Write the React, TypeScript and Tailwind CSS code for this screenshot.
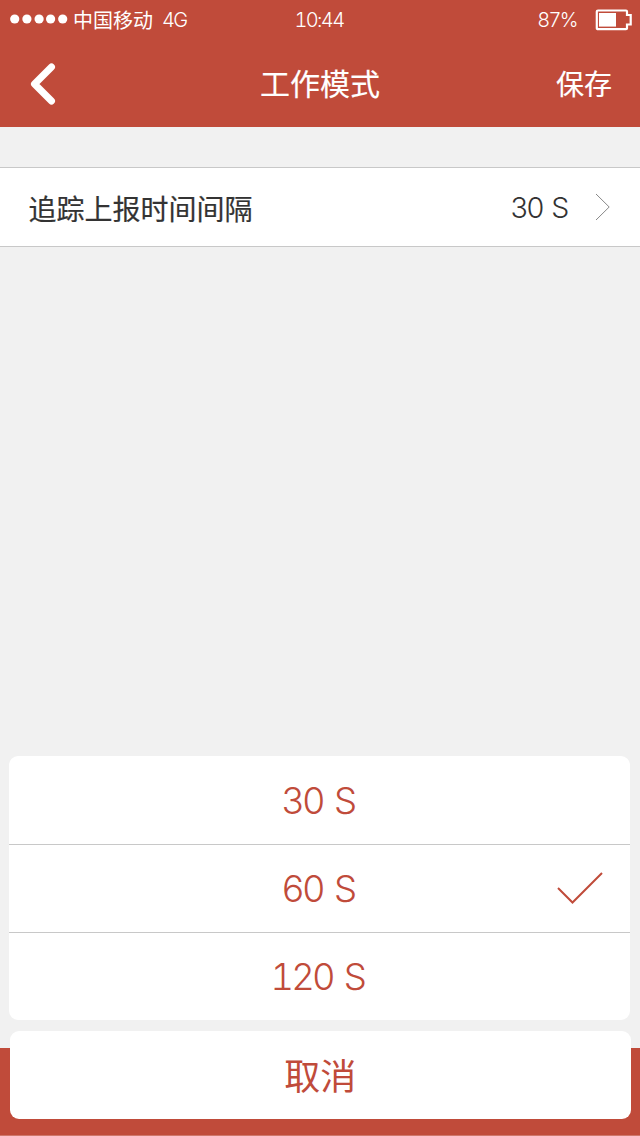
import React from "react";

const sans = "font-['Inter','Noto_Sans_CJK_SC',sans-serif] font-light";
const digits = "tabular-nums tracking-[-0.08em] [word-spacing:0.12em] whitespace-nowrap";
const cjk = "font-['Noto_Sans_CJK_SC',sans-serif] font-normal";

function StatusBar() {
  return (
    <div className="grid h-10 grid-cols-3 items-center text-[20px] leading-[40px]">
      <div className="flex h-10 items-center pl-[10px]">
        <svg width="58" height="10" viewBox="0 0 58 10" fill="currentColor" className="mb-[2px] shrink-0">
          <circle cx="4.7" cy="5" r="4.6" />
          <circle cx="16.9" cy="5" r="4.6" />
          <circle cx="29.1" cy="5" r="4.6" />
          <circle cx="40.6" cy="5" r="4.6" />
          <circle cx="52.7" cy="5" r="4.6" />
        </svg>
        <span className={`${cjk} ml-[5px] text-[20px] whitespace-nowrap`}>中国移动</span>
        <span className={`${digits} ml-[9px]`}>4G</span>
      </div>
      <div className={`${digits} pr-[2px] text-center`}>10:44</div>
      <div className="flex h-10 items-center justify-end pr-[7px]">
        <span className={digits}>87%</span>
        <svg width="38" height="22" viewBox="0 0 38 22" className="ml-[18px]">
          <path
            d="M3 1.5H31Q32 1.5 32 2.5V6H35.7V15.5H32V19.2Q32 20.2 31 20.2H3Q1.8 20.2 1.8 19.2V2.5Q1.8 1.5 3 1.5Z"
            fill="none"
            stroke="currentColor"
            strokeWidth="2.2"
          />
          <rect x="4" y="4" width="17" height="13.6" fill="currentColor" />
        </svg>
      </div>
    </div>
  );
}

function NavBar() {
  return (
    <div className={`${cjk} grid h-[87px] grid-cols-3 items-center leading-[85px]`}>
      <button className="ml-[30px] w-fit" aria-label="返回">
        <svg width="28" height="42" viewBox="0 0 28 42" fill="none" stroke="currentColor" strokeWidth="7" strokeLinecap="round" strokeLinejoin="round">
          <path d="M21.5 4L4.5 21L21.5 38" />
        </svg>
      </button>
      <h1 className="-mt-[3px] text-center text-[30px] font-normal [-webkit-text-stroke:0.15px_currentColor]">工作模式</h1>
      <button className="mr-[28px] justify-self-end text-[28px] [-webkit-text-stroke:0.15px_currentColor]">保存</button>
    </div>
  );
}

export default function App() {
  return (
    <div className={`${sans} relative flex h-[1136px] w-[640px] flex-col overflow-hidden bg-[#f1f1f1]`}>
      <header className="bg-[#c04b3a] text-white">
        <StatusBar />
        <NavBar />
      </header>

      <main className="flex-1 pt-10">
        <div className="flex h-20 items-center border-y border-[#c8c8c8] bg-white pr-[29px] pl-[28.5px] text-[28px] text-[#333]">
          <span className={`${cjk} pt-[2px] [-webkit-text-stroke:0.2px_currentColor]`}>追踪上报时间间隔</span>
          <span className={`${digits} ml-auto pt-[2px] text-[28.5px]`}>30 S</span>
          <svg width="16" height="28" viewBox="0 0 16 28" fill="none" stroke="#888" className="ml-[28px]">
            <path d="M1 1L14.2 14L1 27" />
          </svg>
        </div>
      </main>

      <footer className="h-[88px] border-b border-[#cf776a] bg-[#c04b3a]" />

      <div className="absolute inset-x-0 bottom-[17px] flex flex-col gap-[11px] text-[36.5px] text-[#c04b3a]">
        <div className="mr-[10.5px] ml-[9px] flex flex-col divide-y divide-[#c8c8c8] rounded-[9px] bg-white text-center">
          <button className={`${digits} h-[89px] pt-[2px] pr-[3px]`}>30 S</button>
          <button className={`${digits} grid h-[88px] grid-cols-[1fr_auto_1fr] items-center`}>
            <span className="col-start-2 pt-[2px] pr-[3px]">60 S</span>
            <svg width="48" height="34" viewBox="0 0 48 34" fill="none" stroke="currentColor" strokeWidth="2" className="mr-[26px] mb-[2px] justify-self-end">
              <path d="M2 17L16.5 31.5L46 2" />
            </svg>
          </button>
          <button className={`${digits} h-[87px] pt-[2px] pr-[4px]`}>120 S</button>
        </div>
        <button className={`${cjk} mr-[9.5px] ml-[10px] h-[88px] rounded-[9px] bg-white pb-[2px] text-[36px]`}>取消</button>
      </div>
    </div>
  );
}
